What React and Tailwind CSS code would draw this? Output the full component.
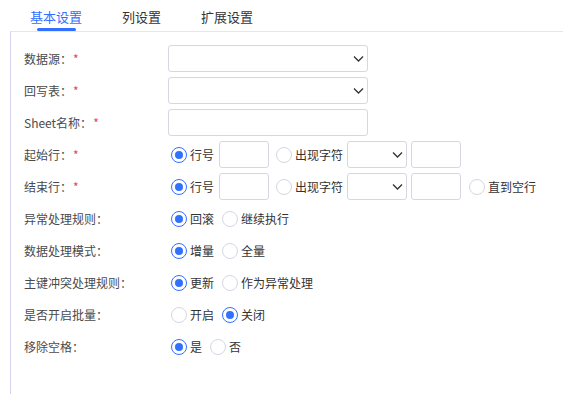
import { useState } from 'react'

const font = { fontFamily: '"Noto Sans CJK SC", "Noto Sans", sans-serif' }

function Chevron() {
  return (
    <svg width="11" height="7" viewBox="0 0 11 7" className="absolute right-[3px] top-1/2 -translate-y-1/2">
      <path d="M1 1l4.5 4.5L10 1" fill="none" stroke="#333" strokeWidth="1.3" />
    </svg>
  )
}

function Select({ w }) {
  return (
    <div className={`relative h-[27px] ${w} rounded-[3px] border border-[#d5d7e3] bg-white`}>
      <Chevron />
    </div>
  )
}

function Input({ w }) {
  return <div className={`h-[27px] ${w} rounded-[3px] border border-[#d5d7e3] bg-white`} />
}

function Radio({ checked, label, onClick }) {
  return (
    <label onClick={onClick} className="flex items-center cursor-pointer ml-[3px] mr-[5px]">
      {checked ? (
        <span className="w-4 h-4 rounded-full border-[1.5px] border-[#3370ff] flex items-center justify-center">
          <span className="w-[8px] h-[8px] rounded-full bg-[#3370ff]" />
        </span>
      ) : (
        <span className="w-4 h-4 rounded-full border border-[#d5d7e3] bg-white" />
      )}
      <span className="ml-[3px] text-[12px] text-[#333]">{label}</span>
    </label>
  )
}

function Row({ label, required, children }) {
  return (
    <div className="flex items-center h-[27px] mb-[5px]">
      <div className="w-[144px] text-[12px] text-[#4a4a4a] flex items-center">
        {label}
        {required && <span className="text-[#f53f3f] ml-[1px]">*</span>}
      </div>
      <div className="flex items-center">{children}</div>
    </div>
  )
}

function RadioGroup({ options, initial }) {
  const [v, setV] = useState(initial)
  return options.map((o, i) => (
    <Radio key={o} label={o} checked={v === i} onClick={() => setV(i)} />
  ))
}

export default function App() {
  const [tab, setTab] = useState(0)
  const tabs = ['基本设置', '列设置', '扩展设置']

  return (
    <div style={font} className="w-[563px] h-[394px] bg-white flex flex-col">
      <div className="flex h-[31px] pl-[30px]">
        {tabs.map((t, i) => (
          <div
            key={t}
            onClick={() => setTab(i)}
            className={`relative pt-[7px] text-[13px] mr-[40px] cursor-pointer ${tab === i ? 'text-[#3370ff]' : 'text-[#333]'}`}
          >
            {t}
            {tab === i && (
              <span className="absolute left-[7px] right-[6px] bottom-0 h-[3px] rounded-full bg-[#3370ff]" />
            )}
          </div>
        ))}
      </div>
      <div className="flex-1 ml-[10px] border-t border-t-[#e5e6eb] border-l border-l-[#d4d3ee] pl-[13px] pt-[13px]">
        <Row label="数据源：" required>
          <Select w="w-[200px]" />
        </Row>
        <Row label="回写表：" required>
          <Select w="w-[200px]" />
        </Row>
        <Row label="Sheet名称：" required>
          <Input w="w-[200px]" />
        </Row>
        <Row label="起始行：" required>
          <RadioGroup options={['行号']} initial={0} />
          <div className="mr-[4px]"><Input w="w-[50px]" /></div>
          <Radio label="出现字符" checked={false} />
          <div className="ml-[-1px]"><Select w="w-[60px]" /></div>
          <div className="ml-[4px]"><Input w="w-[50px]" /></div>
        </Row>
        <Row label="结束行：" required>
          <RadioGroup options={['行号']} initial={0} />
          <div className="mr-[4px]"><Input w="w-[50px]" /></div>
          <Radio label="出现字符" checked={false} />
          <div className="ml-[-1px]"><Select w="w-[60px]" /></div>
          <div className="ml-[4px] mr-[5px]"><Input w="w-[50px]" /></div>
          <Radio label="直到空行" checked={false} />
        </Row>
        <Row label="异常处理规则：">
          <RadioGroup options={['回滚', '继续执行']} initial={0} />
        </Row>
        <Row label="数据处理模式：">
          <RadioGroup options={['增量', '全量']} initial={0} />
        </Row>
        <Row label="主键冲突处理规则：">
          <RadioGroup options={['更新', '作为异常处理']} initial={0} />
        </Row>
        <Row label="是否开启批量：">
          <RadioGroup options={['开启', '关闭']} initial={1} />
        </Row>
        <Row label="移除空格：">
          <RadioGroup options={['是', '否']} initial={0} />
        </Row>
      </div>
    </div>
  )
}
